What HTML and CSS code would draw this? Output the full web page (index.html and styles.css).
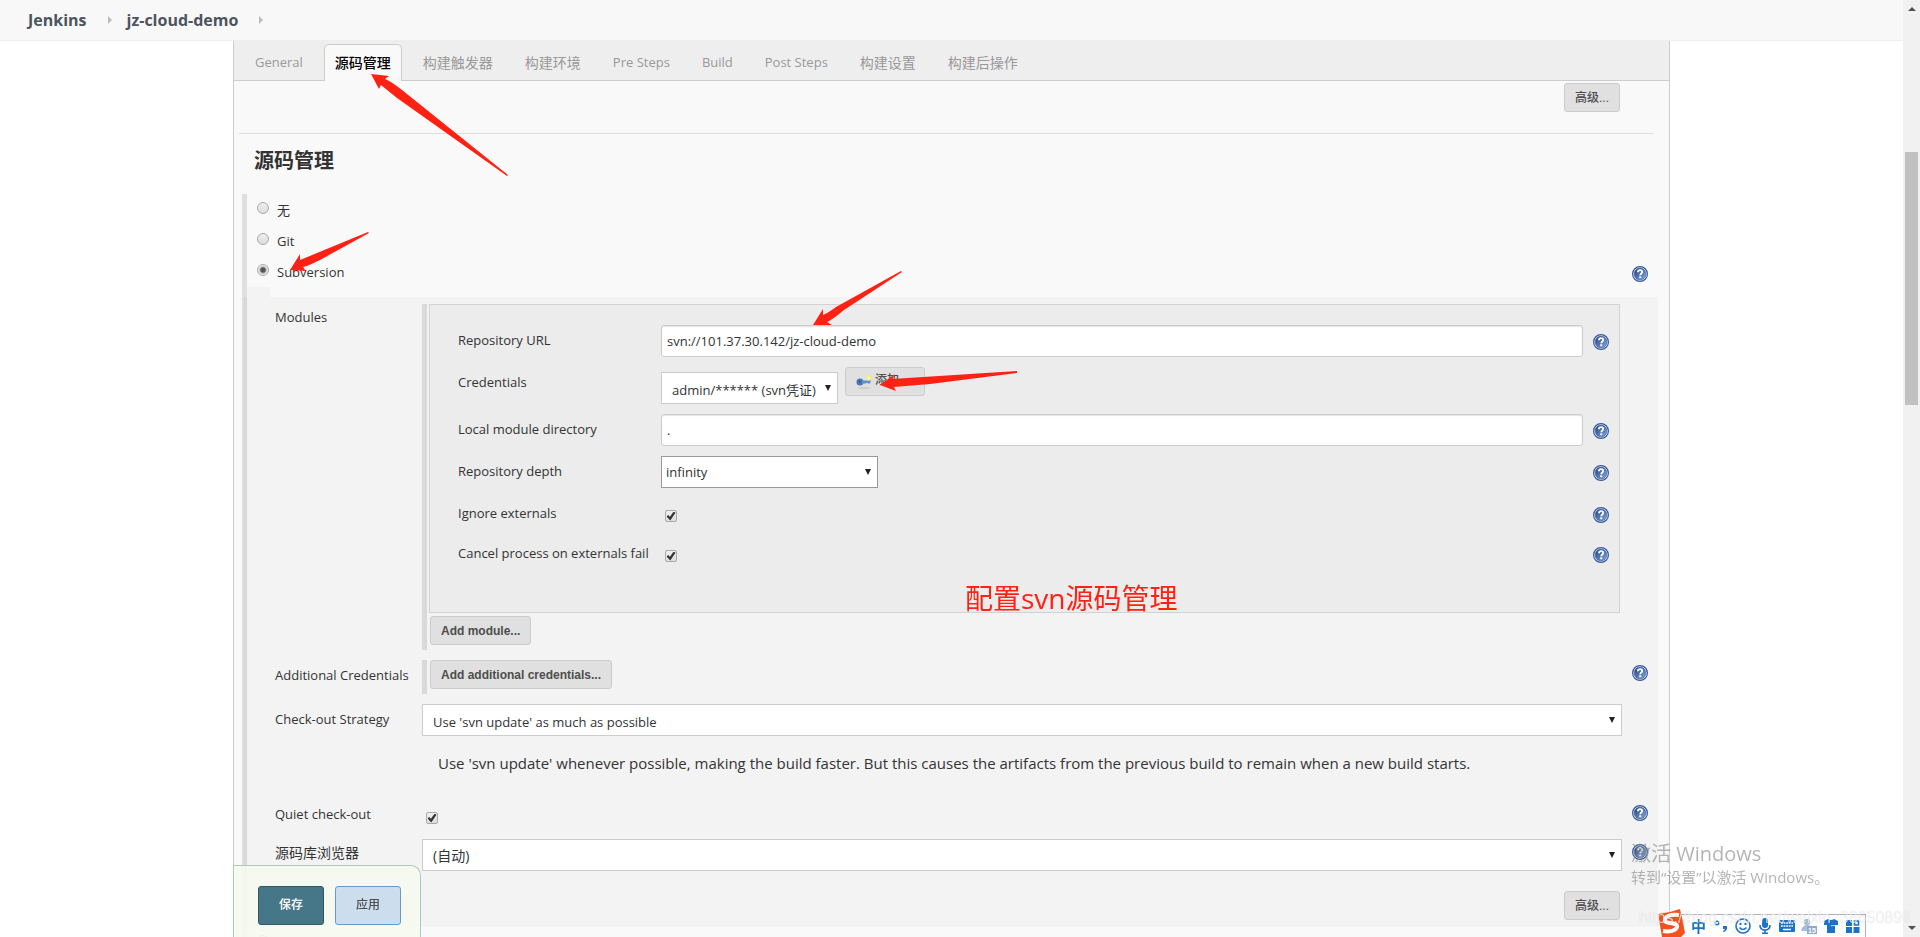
FILE: index.html
```html
<!DOCTYPE html>
<html lang="zh-CN">
<head>
<meta charset="utf-8">
<title>jz-cloud-demo Config [Jenkins]</title>
<link rel="stylesheet" href="styles.css">
</head>
<body>
<svg class="defs" aria-hidden="true">
  <defs>
    <linearGradient id="help-fill" x1="0" y1="0" x2="1" y2="1">
      <stop offset="0" stop-color="#1f3f80"/><stop offset="1" stop-color="#86a9dc"/>
    </linearGradient>
    <symbol id="help" viewBox="0 0 16 16">
      <circle cx="8" cy="8" r="7.400" fill="#eef3fb" stroke="#34579a" stroke-width="1.200"/>
      <circle cx="8" cy="8" r="5.900" fill="url(#help-fill)" stroke="#3b5f9e" stroke-width=".6"/>
      <path d="M5.900 6.200C6 4.700 7 4.200 8.100 4.200c1.200 0 2.100.7 2.100 1.800C10.200 7.500 8.300 7.400 8.200 9.300" fill="none" stroke="#fff" stroke-width="1.800"/>
      <rect x="7.200" y="10.300" width="2" height="1.900" fill="#fff"/>
    </symbol>
  </defs>
</svg>
<div class="window">
  <div class="page">
    <nav class="crumbs" aria-label="Breadcrumb">
      <a href="#">Jenkins</a><i class="crumb-arrow"></i><a href="#">jz-cloud-demo</a><i class="crumb-arrow"></i>
    </nav>
    <main class="panel">
      <nav class="tabs">
        <a href="#" lang="en">General</a>
        <a href="#" class="active">源码管理</a>
        <a href="#">构建触发器</a>
        <a href="#">构建环境</a>
        <a href="#" lang="en">Pre Steps</a>
        <a href="#" lang="en">Build</a>
        <a href="#" lang="en">Post Steps</a>
        <a href="#">构建设置</a>
        <a href="#">构建后操作</a>
      </nav>
      <form class="config">
        <div class="advanced"><button type="button" class="btn">高级...</button></div>
        <hr>
        <h2>源码管理</h2>
        <section class="scm">
          <div class="choice"><input type="radio" name="scm" id="scm-none"><label for="scm-none">无</label></div>
          <div class="choice"><input type="radio" name="scm" id="scm-git"><label for="scm-git">Git</label></div>
          <div class="choice last"><input type="radio" name="scm" id="scm-svn" checked><label for="scm-svn">Subversion</label>
            <a class="help" href="#" aria-label="Help"><svg><use href="#help"/></svg></a></div>
          <div class="options">
            <div class="row">
              <span class="label heading">Modules</span>
              <div class="repeat">
                <div class="module">
                  <div class="row">
                    <label class="label" for="url">Repository URL</label>
                    <input class="text" id="url" type="text" value="svn://101.37.30.142/jz-cloud-demo">
                    <a class="help" href="#" aria-label="Help"><svg><use href="#help"/></svg></a>
                  </div>
                  <div class="row">
                    <label class="label" for="cred">Credentials</label>
                    <div class="cred">
                      <div class="select cred-select"><select id="cred"><option>admin/****** (svn凭证)</option></select></div>
                      <button type="button" class="btn add"><svg viewBox="0 0 16 16"><ellipse cx="8" cy="14" rx="6" ry="1" fill="#ccc"/><circle cx="4" cy="8" r="3.500" fill="#4777b5"/><path d="M6 6.500h9l-1 3h-2l-1-1-1 1H6z" fill="#5d8fcc"/><circle cx="3.500" cy="7.500" r="1" fill="#2c5793"/><circle cx="12.500" cy="4" r="2.500" fill="#f7ee62"/><circle cx="12.500" cy="4" r="1" fill="#fff"/></svg>添加</button>
                    </div>
                  </div>
                  <div class="row">
                    <label class="label" for="dir">Local module directory</label>
                    <input class="text" id="dir" type="text" value=".">
                    <a class="help" href="#" aria-label="Help"><svg><use href="#help"/></svg></a>
                  </div>
                  <div class="row">
                    <label class="label" for="depth">Repository depth</label>
                    <div class="select depth"><select id="depth"><option>infinity</option></select></div>
                    <a class="help" href="#" aria-label="Help"><svg><use href="#help"/></svg></a>
                  </div>
                  <div class="row">
                    <label class="label" for="ignore">Ignore externals</label>
                    <input type="checkbox" id="ignore" checked>
                    <a class="help" href="#" aria-label="Help"><svg><use href="#help"/></svg></a>
                  </div>
                  <div class="row">
                    <label class="label" for="cancel">Cancel process on externals fail</label>
                    <input type="checkbox" id="cancel" checked>
                    <a class="help" href="#" aria-label="Help"><svg><use href="#help"/></svg></a>
                  </div>
                </div>
                <button type="button" class="btn">Add module...</button>
              </div>
            </div>
            <div class="row">
              <span class="label">Additional Credentials</span>
              <div class="repeat short"><button type="button" class="btn">Add additional credentials...</button></div>
              <a class="help" href="#" aria-label="Help"><svg><use href="#help"/></svg></a>
            </div>
            <div class="row">
              <label class="label" for="strategy">Check-out Strategy</label>
              <div class="select"><select id="strategy"><option>Use 'svn update' as much as possible</option></select></div>
            </div>
            <p class="note">Use 'svn update' whenever possible, making the build faster. But this causes the artifacts from the previous build to remain when a new build starts.</p>
            <div class="row quiet">
              <label class="label" for="quiet">Quiet check-out</label>
              <input type="checkbox" id="quiet" checked>
              <a class="help" href="#" aria-label="Help"><svg><use href="#help"/></svg></a>
            </div>
            <div class="row browser">
              <label class="label" for="browser">源码库浏览器</label>
              <div class="select"><select id="browser"><option>(自动)</option></select></div>
              <a class="help" href="#" aria-label="Help"><svg><use href="#help"/></svg></a>
            </div>
            <div class="advanced"><button type="button" class="btn">高级...</button></div>
          </div>
          <div class="choice"><input type="radio" name="scm" aria-label="SCM"></div>
        </section>
        <div class="save-bar">
          <button type="button" class="save">保存</button>
          <button type="button" class="apply">应用</button>
        </div>
      </form>
    </main>
  </div>
  <div class="scrollbar" aria-hidden="true"><i class="up"></i><i class="thumb"></i><i class="down"></i></div>

  <svg class="arrows" viewBox="0 0 1920 937" aria-hidden="true">
    <g fill="#ff2113">
      <path d="M371 74L389 76L385 79Q392 82 402 90L508 175L507 176L397 98Q387 90 381 85L379 89Z"/>
      <path d="M290 270L300 254L300 260L368 232L369 233L320 260Q308 266 303 267L306 271Z"/>
      <path d="M813 325L823 309L823 315Q828 313 836 307L901 271L902 272L844 310Q832 320 827 322L832 325Z"/>
      <path d="M880 385L895 374L892 379L1017 371V373L930 384L894 387L896 391Z"/>
    </g>
  </svg>
  <p class="caption">配置svn源码管理</p>
  <div class="activate"><strong>激活 Windows</strong><span>转到“设置”以激活 Windows。</span></div>
  <div class="ime">
    <svg class="logo" viewBox="0 0 28 28"><path d="M1 5Q12 4 23 0Q26 12 28 24L24 28H5Q3 16 1 5Z" fill="#f4511e"/><path d="M22 6C14 5 7 7 8 12C9 15 21 13 20 18C19 22 12 23 6 22" fill="none" stroke="#fff" stroke-width="4"/></svg>
    <b>中</b>
    <svg viewBox="0 0 16 16"><circle cx="4" cy="5" r="1.800" fill="none" stroke="#1b72c8" stroke-width="1.400"/><path d="M10 8h4v2q0 3-3.500 4l-.5-1q2-1 2-2h-2z" fill="#1b72c8"/></svg>
    <svg viewBox="0 0 16 16" fill="none" stroke="#1b72c8" stroke-width="1.600"><circle cx="8" cy="8" r="7"/><path d="M4.500 9.500q3.500 4 7 0"/><path d="M5.500 5v2M10.500 5v2" stroke-width="2"/></svg>
    <svg viewBox="0 0 16 16"><rect x="5" y="0" width="6" height="10" rx="3" fill="#1b72c8"/><path d="M3 7q0 5 5 5t5-5M8 12v3M5 15.200h6" fill="none" stroke="#1b72c8" stroke-width="1.600"/></svg>
    <svg viewBox="0 0 16 16"><rect y="2" width="16" height="12" rx="1" fill="#1b72c8"/><path d="M2 5h12M2 8h12" stroke="#fff" stroke-width="1.600" stroke-dasharray="1.800 .8"/><path d="M4 11.500h8" stroke="#fff" stroke-width="1.500"/></svg>
    <svg viewBox="0 0 16 16"><circle cx="6" cy="4" r="3.200" fill="#a9bdd6"/><path d="M0 12q2-5 6-5 3 0 5 2v4H1z" fill="#a9bdd6"/><rect x="6" y="8" width="10" height="8" fill="#8eaacb"/><text x="7" y="15" class="level">15</text></svg>
    <svg viewBox="0 0 16 16"><path d="M1 3l4-2q3 2 6 0l4 2v4h-3v8H4V7H1z" fill="#1b72c8"/></svg>
    <svg viewBox="0 0 16 16" fill="#1b72c8"><path d="M1 2h6v6H1zM1 9h6v6H1zM8.500 9h6v6h-6z"/><path d="M9.500 3h4v4h-4z" fill="none" stroke="#1b72c8" stroke-width="1.600"/></svg>
  </div>
  <div class="source">https://blog.csdn.net/weixin_38650898</div>
</div>
</body>
</html>
```
FILE: styles.css
```css
* { box-sizing: border-box; }
body {
  margin: 0;
  overflow: hidden;
  background: #fff;
  color: #333;
  font-family: "Open Sans", "Noto Sans CJK SC", sans-serif;
  font-size: 13px;
}
a { color: inherit; text-decoration: none; }
button, input, select { font: inherit; color: inherit; margin: 0; }
.defs { position: absolute; width: 0; height: 0; }

.window { position: relative; display: flex; height: 100vh; }
.page { flex: 1; min-width: 0; height: 100vh; overflow: hidden; display: flex; flex-direction: column; }

.crumbs {
  flex: none;
  display: flex;
  align-items: center;
  height: 41px;
  padding-left: 28px;
  background: #f8f8f8;
  border-bottom: 1px solid #eee;
  color: #4d545d;
  font-size: 16px;
  font-weight: bold;
}
.crumb-arrow { margin: 0 15px 0 21px; border: 4px solid transparent; border-left-color: #bbb; border-right: 0; }

.panel {
  flex: 1;
  margin: 0 233px;
  background: #f9f9f9;
  border: 1px solid #ccc;
  border-width: 0 1px;
}
.tabs {
  display: flex;
  gap: 10px;
  height: 40px;
  padding: 3px 0 0 10px;
  background: #eee;
  border-bottom: 1px solid #ccc;
  color: #999;
  font-size: 14px;
}
.tabs a { height: 37px; padding: 0 10px; border: 1px solid transparent; border-bottom: 0; border-radius: 5px 5px 0 0; line-height: 35px; white-space: nowrap; }
.tabs a:lang(en) { font-size: 13px; }
.tabs .active { background: #f9f9f9; border-color: #ccc; color: #000; font-weight: 500; }

.config { padding: 2px 11px 0 8px; }
.advanced { display: flex; justify-content: flex-end; padding-right: 38px; }
.btn {
  height: 29px;
  padding: 0 10px;
  background: #e0e0e0;
  border: 1px solid #ccc;
  border-radius: 3px;
  color: #4d4d4d;
  font-family: "Liberation Sans", "Noto Sans CJK SC", sans-serif;
  font-size: 12px;
  font-weight: bold;
  line-height: 24px;
  white-space: nowrap;
}
.advanced .btn { font-weight: 500; }
hr { height: 1px; margin: 21px 5px 0 -3px; border: 0; background: #ddd; }
h2 { margin: 13px 0 19px 12px; font-size: 20px; line-height: 28px; font-weight: bold; }

.scm { border-left: 5px solid #dfdfdf; }
.choice { display: flex; height: 31px; padding-left: 10px; line-height: 32px; }
.choice.last { height: 41px; }
.choice label { flex: 1; margin-left: 8px; }
.choice .help { margin: 10px 10px 0 0; }
input[type=radio] {
  appearance: none;
  width: 12px;
  height: 12px;
  margin-top: 8px;
  border: 1px solid #aaa;
  border-radius: 50%;
  background: linear-gradient(#eee, #ddd);
}
input[type=radio]:checked { background: radial-gradient(circle, #555 2px, #e6e6e6 4px); }
input[type=checkbox] {
  appearance: none;
  display: grid;
  place-content: center;
  width: 12px;
  height: 12px;
  margin: 12px 0 0 4px;
  border: 1px solid #aaa;
  border-radius: 2px;
  background: linear-gradient(#f0f0f0, #ddd);
}
input[type=checkbox]::before {
  content: "";
  width: 9px;
  height: 9px;
  background: #333;
  clip-path: polygon(0 55%, 18% 38%, 38% 58%, 80% 0, 100% 15%, 42% 100%);
}

.options {
  position: relative;
  display: flex;
  flex-direction: column;
  gap: 10px;
  margin-left: -3px;
  padding: 7px 0 7px 28px;
  border-left: 3px solid #d8d8d8;
  background: #f3f3f3;
}
.options::before { content: ""; position: absolute; left: 0; top: -10px; width: 23px; height: 10px; background: #f3f3f3; }
.row { display: grid; grid-template-columns: 147px 1fr 36px; align-items: start; }
.label { line-height: 30px; white-space: nowrap; }
.heading { line-height: 26px; }
.quiet .label { line-height: 29px; }
.browser .label, .browser select { font-size: 14px; line-height: 28px; }
.help { display: block; width: 16px; height: 16px; }
.help svg { display: block; width: 16px; height: 16px; }
.row .help { grid-column: 3; margin: 5px 0 0 10px; }

.repeat { padding: 0 0 5px 2px; border-left: 5px solid #d9d9d9; }
.repeat > .btn { display: block; margin: 3px 0 0 1px; }
.repeat.short > .btn { margin-top: 0; }
.module {
  display: flex;
  flex-direction: column;
  gap: 10px;
  margin-right: 2px;
  padding: 20px 0 44px 28px;
  background: #ececec;
  border: 1px solid #d2d2d2;
}
.module .row { grid-template-columns: 203px 1fr 36px; }
.module .help { margin: 9px 0 0 10px; }

.text { width: 100%; height: 32px; padding: 0 5px; border: 1px solid #ccc; border-radius: 3px; background: #fff; box-shadow: inset 0 1px 1px #e4e4e4; }
.select { position: relative; }
.select::after {
  content: "";
  position: absolute;
  right: 7px;
  top: 13px;
  border: 3px solid transparent;
  border-top: 6px solid #222;
  border-bottom: 0;
}
select {
  display: block;
  appearance: none;
  width: 100%;
  height: 32px;
  padding: 4px 10px 0;
  border: 1px solid #ccc;
  border-radius: 0;
  background: #fff;
}
.browser select { padding-top: 2px; }
.depth { width: 217px; }
.depth select { padding: 0 4px; border-color: #999; }
.cred { display: flex; gap: 7px; }
.cred-select { width: 177px; margin-top: 5px; }
.add { display: flex; align-items: flex-start; gap: 3px; width: 80px; font-weight: 500; }
.add svg { width: 16px; height: 16px; margin-top: 6px; }
.note { height: 44px; margin: 0 0 0 163px; font-size: 15px; line-height: 34px; }
.options > .advanced { padding: 10px 38px 0 0; }

.save-bar {
  position: fixed;
  left: 233px;
  bottom: 0;
  display: flex;
  gap: 11px;
  padding: 20px 19px 12px 24px;
  background: rgba(245, 249, 239, .9);
  border: 1px solid #a6cdb9;
  border-bottom: 0;
  border-radius: 0 10px 0 0;
}
.save-bar button { width: 66px; height: 39px; padding: 0 0 3px; border: 1px solid #2d5766; border-radius: 3px; background: #457788; color: #eee; font-size: 12px; font-weight: bold; }
.save-bar .apply { background: #ccdded; border-color: #6699cc; color: #4d4d4d; font-weight: 500; }

.scrollbar { flex: none; width: 17px; display: flex; flex-direction: column; align-items: center; padding: 7px 0; background: #f1f1f1; }
.scrollbar .up { border: 4px solid transparent; border-top: 0; border-bottom: 4px solid #505050; }
.scrollbar .thumb { width: 13px; height: 27.4%; margin: 141px 0 auto; background: #c1c1c1; }
.scrollbar .down { border: 4px solid transparent; border-bottom: 0; border-top: 4px solid #505050; }

.arrows { position: absolute; inset: 0; width: 100%; height: 100%; pointer-events: none; }
.caption { position: absolute; left: 965px; top: 578px; margin: 0; color: #ff2113; font-size: 28px; line-height: 40px; }
.activate { position: absolute; right: 90px; bottom: 50px; width: 199px; color: rgba(140, 140, 140, .65); white-space: nowrap; }
.activate strong { display: block; font-size: 20px; font-weight: normal; line-height: 27px; }
.activate span { display: block; font-size: 15px; line-height: 20px; }
.ime {
  position: absolute;
  right: 54px;
  bottom: 0;
  display: flex;
  align-items: center;
  gap: 6px;
  height: 23px;
  padding: 0 4px 0 0;
  background: #fff;
  border: 1px solid #b5adc0;
  border-bottom: 0;
}
.ime svg { width: 16px; height: 16px; }
.ime .logo { width: 28px; height: 28px; margin: -6px 0 0 -11px; }
.ime b { width: 16px; color: #1b72c8; font-size: 15px; line-height: 22px; }
.level { fill: #fff; font-family: "Liberation Sans", sans-serif; font-size: 7px; font-weight: bold; }
.source { position: absolute; right: 9px; bottom: 7px; color: rgba(255, 255, 255, .7); font-family: "Liberation Sans", sans-serif; font-size: 16px; line-height: 24px; text-shadow: 0 0 1px rgba(0, 0, 0, .18); }
```
